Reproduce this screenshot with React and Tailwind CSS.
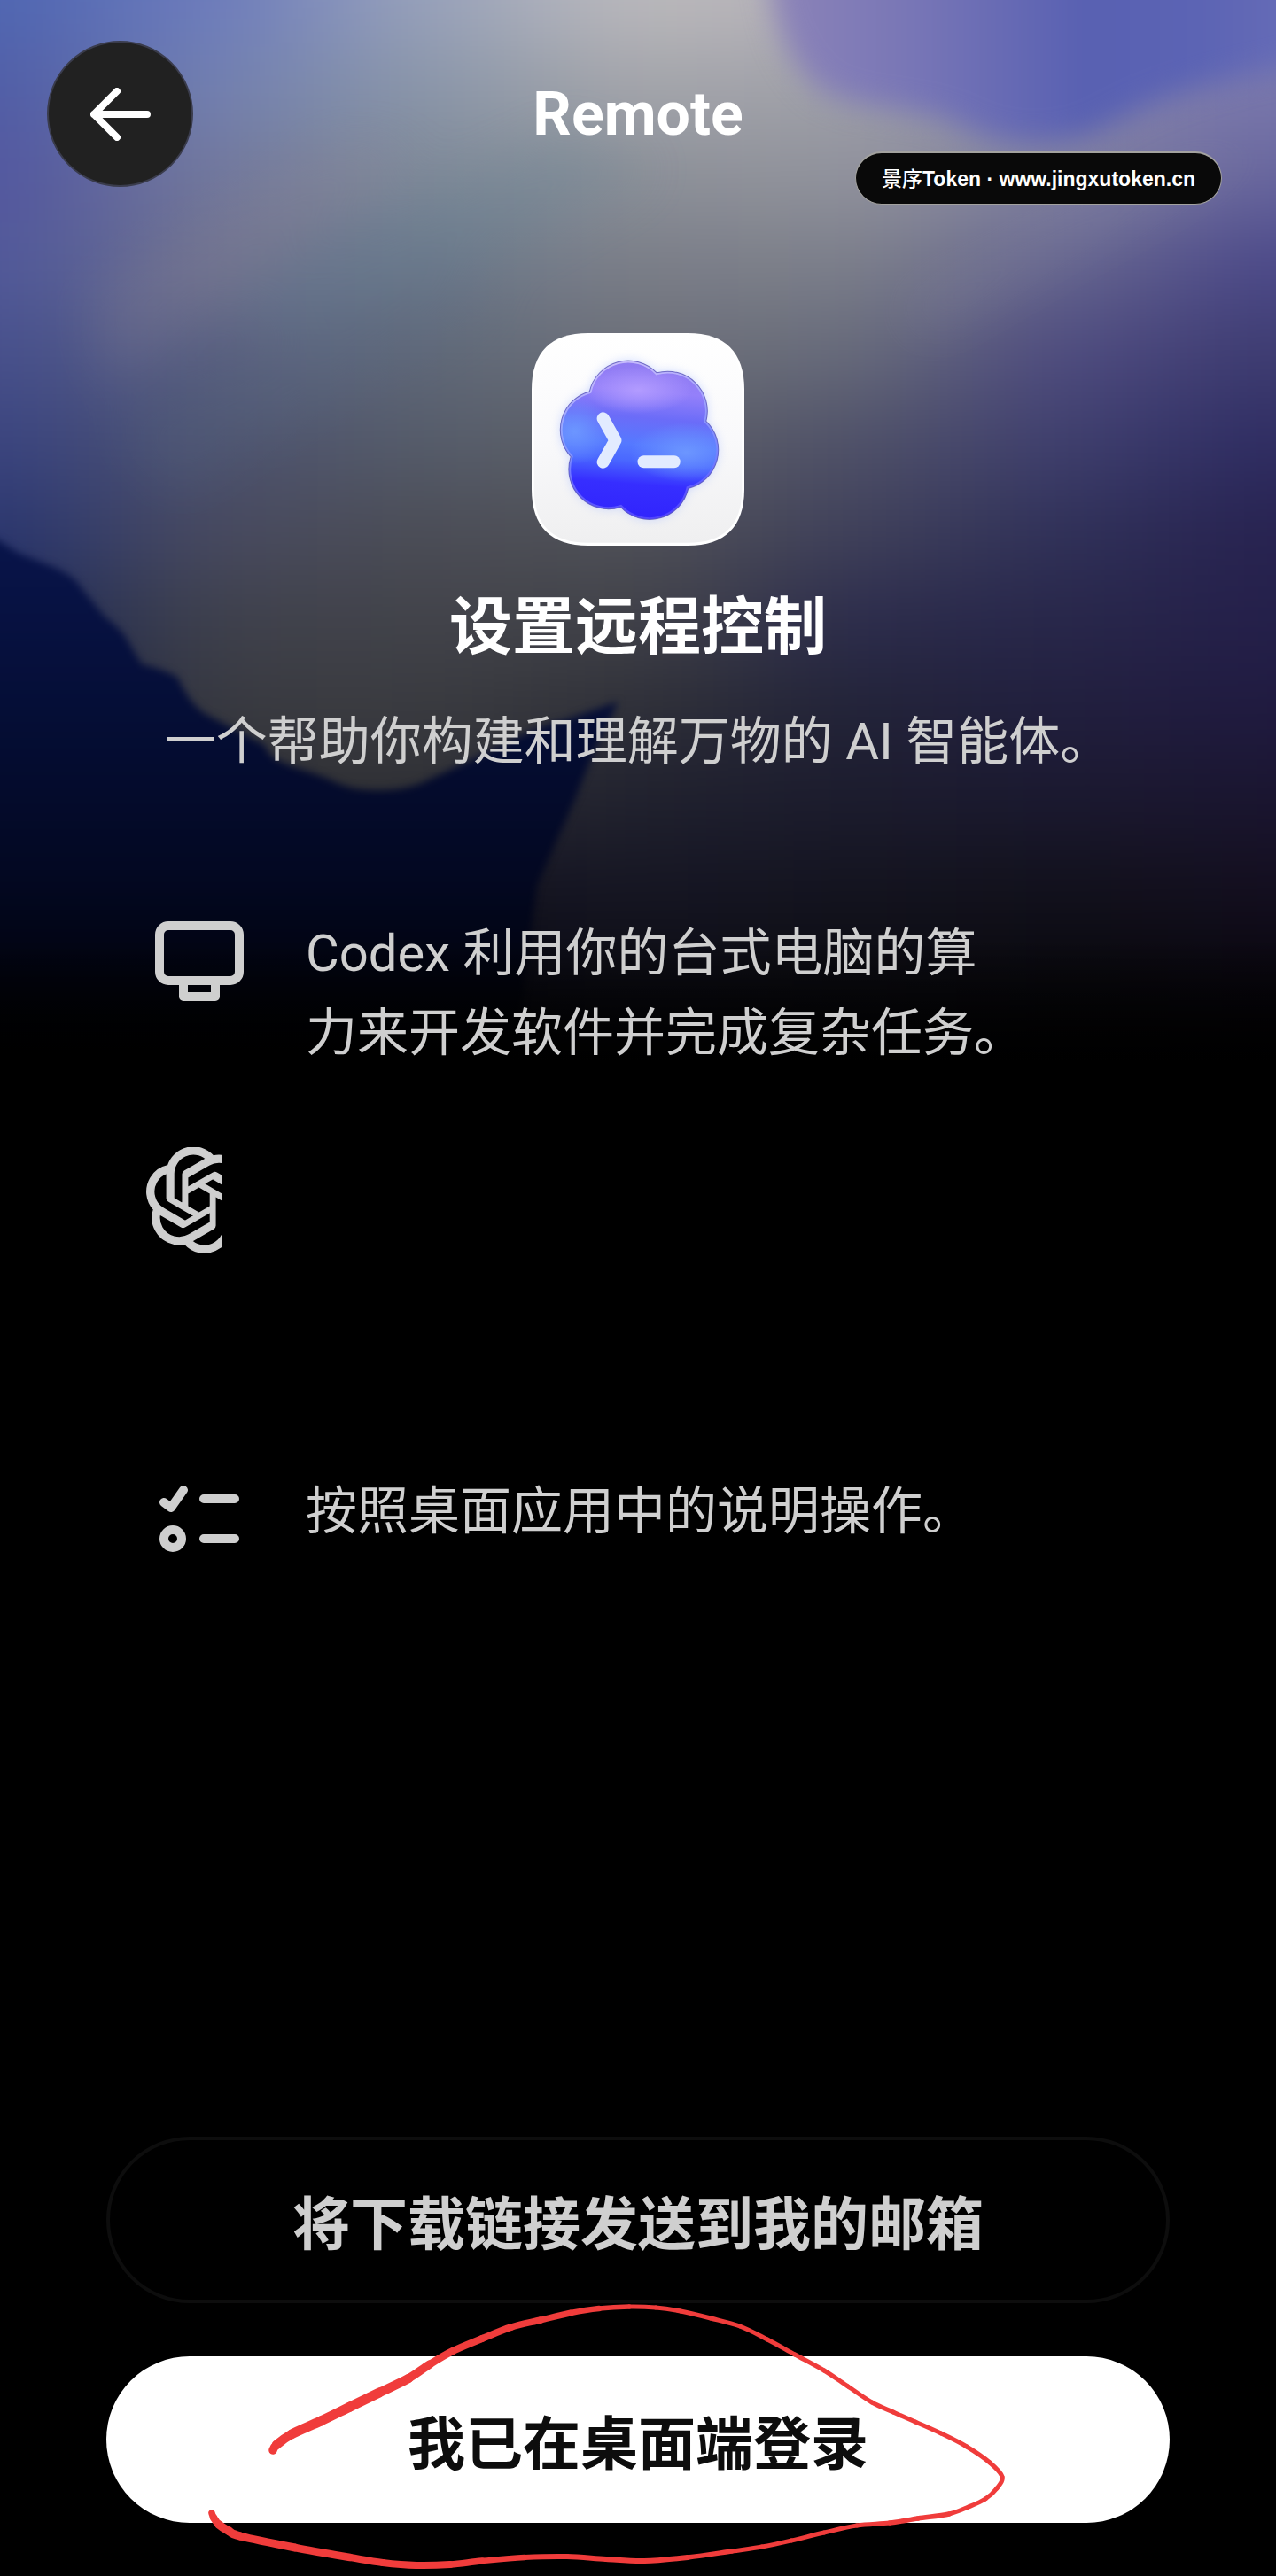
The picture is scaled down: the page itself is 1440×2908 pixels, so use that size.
import React from "react";
import { SiOpenai } from "react-icons/si";

const CELLS = [
  ["#4f66b2", "#6c7bbd", "#98a2bb", "#bcbabc", "#b4b0b8", "#8c88b6", "#7478b8"],
  ["#4f5ca6", "#7280b0", "#8a96a8", "#a4a5aa", "#9fa0a9", "#8886aa", "#7876ac"],
  ["#52569f", "#73789c", "#7e8a98", "#8c9098", "#92939c", "#7f7fa0", "#67659e"],
  ["#50589a", "#6c708e", "#6c788a", "#7b7e88", "#7c7f8a", "#65658f", "#4a4788"],
  ["#464f8c", "#596080", "#5f6878", "#6c6f78", "#676b7a", "#4e4b80", "#3d3b70"],
  ["#3a4480", "#4c516e", "#555c6a", "#5f6168", "#4f5168", "#3f3f6e", "#2e2c62"],
  ["#2a3670", "#484a60", "#4b4d56", "#505158", "#40415a", "#303159", "#272250"],
  ["#1d2858", "#3f414c", "#42434a", "#414248", "#2c2c4c", "#28274a", "#241f4a"],
  ["#101a44", "#393a40", "#3a3b40", "#2f3038", "#222338", "#211f3e", "#201a40"],
  ["#060e30", "#2d2e34", "#303136", "#20212e", "#1c1c2e", "#1b1930", "#1a1530"],
  ["#040920", "#101018", "#141420", "#161624", "#141420", "#12111c", "#140f20"],
  ["#02040f", "#020410", "#080812", "#0e0e16", "#0c0c12", "#0a090f", "#0a0710"],
  ["#000000", "#010104", "#020204", "#040406", "#040406", "#030304", "#030204"],
];

function Artwork() {
  return (
    <svg
      className="absolute inset-x-0 top-0 h-[1200px] w-full"
      viewBox="0 0 1440 1200"
      preserveAspectRatio="none"
      colorInterpolationFilters="sRGB"
      aria-hidden="true"
    >
      <defs>
        <filter id="mesh" x="-20%" y="-20%" width="140%" height="140%">
          <feGaussianBlur stdDeviation="90 42" />
        </filter>
        <filter id="soft" x="-20%" y="-30%" width="140%" height="160%">
          <feGaussianBlur stdDeviation="16" />
        </filter>
        <filter id="edge" x="-20%" y="-20%" width="140%" height="140%">
          <feGaussianBlur stdDeviation="4" />
        </filter>
        <filter id="wide" x="-60%" y="-60%" width="220%" height="220%">
          <feGaussianBlur stdDeviation="30" />
        </filter>
        <linearGradient id="night" x1="0" y1="0" x2="0" y2="1">
          <stop offset="0" stopColor="#09154c" />
          <stop offset="0.35" stopColor="#050e36" />
          <stop offset="0.65" stopColor="#030822" />
          <stop offset="1" stopColor="#000000" />
        </linearGradient>
        <linearGradient id="iris" x1="0" y1="0" x2="1" y2="0">
          <stop offset="0" stopColor="#8d84b8" />
          <stop offset="0.25" stopColor="#7876b6" />
          <stop offset="0.55" stopColor="#5860b2" />
          <stop offset="0.75" stopColor="#5c64b4" />
          <stop offset="1" stopColor="#6c70b8" />
        </linearGradient>
        <linearGradient id="floor" x1="0" y1="0" x2="0" y2="1">
          <stop offset="0" stopColor="#000" stopOpacity="0" />
          <stop offset="1" stopColor="#000" />
        </linearGradient>
      </defs>
      <g filter="url(#mesh)">
        {CELLS.map((row, r) =>
          row.map((fill, c) => (
            <rect
              key={`${r}-${c}`}
              x={c === 0 ? -300 : c * 240 - 121}
              y={r === 0 ? -200 : r * 100 - 51}
              width={c === 0 ? 420 : c === 6 ? 450 : 242}
              height={r === 0 ? 250 : 102}
              fill={fill}
            />
          ))
        )}
      </g>
      <path
        d="M866 -60 C870 30 890 75 930 104 C980 128 1040 118 1092 146 C1140 168 1210 168 1262 136 C1320 104 1390 86 1520 60 V-60Z"
        fill="url(#iris)"
        filter="url(#soft)"
      />
      <g filter="url(#wide)" opacity="0.22">
        <path d="M240 330 L640 150 L740 190 L360 400Z" fill="#5f7f92" />
        <path d="M120 480 L520 300 L560 340 L200 560Z" fill="#5a6c84" />
        <path d="M100 330 L380 160 L480 170 L120 440Z" fill="#8f8694" />
        <path d="M1440 160 L1180 300 L1040 380 L1020 340 L1300 200Z" fill="#8c8ca4" />
      </g>
      <path
        d="M-30 592 L20 624 L60 640 Q84 650 92 664 L118 696 Q140 712 148 730 L160 750 Q180 754 200 764 C212 788 218 796 232 806 L300 842 C302 862 345 868 372 880 Q395 892 418 892 Q458 894 484 880 L551 849 Q600 822 640 812 L698 792 Q668 850 650 900 L606 1000 L580 1200 H-30Z"
        fill="url(#night)"
        filter="url(#edge)"
      />
      <rect y="1060" width="1440" height="140" fill="url(#floor)" />
    </svg>
  );
}

function CodexLogo() {
  return (
    <svg viewBox="120 108 717 717" className="size-[240px]" colorInterpolationFilters="sRGB" role="img" aria-label="Codex">
      <defs>
        <linearGradient id="tile" x1="0" y1="0" x2="0" y2="1">
          <stop offset="0" stopColor="#ffffff" />
          <stop offset="0.5" stopColor="#f9f9fb" />
          <stop offset="1" stopColor="#efeff0" />
        </linearGradient>
        <linearGradient id="bloom" x1="0.5" y1="0" x2="0.42" y2="1">
          <stop offset="0" stopColor="#8f7af0" />
          <stop offset="0.2" stopColor="#9480fa" />
          <stop offset="0.36" stopColor="#6b6cf8" />
          <stop offset="0.52" stopColor="#5579ff" />
          <stop offset="0.62" stopColor="#4a68ff" />
          <stop offset="0.76" stopColor="#362eff" />
          <stop offset="1" stopColor="#3022fc" />
        </linearGradient>
        <radialGradient id="glow">
          <stop offset="0" stopColor="#6c96ff" />
          <stop offset="1" stopColor="#6c96ff" stopOpacity="0" />
        </radialGradient>
        <radialGradient id="lilac">
          <stop offset="0" stopColor="#b29bff" />
          <stop offset="1" stopColor="#b29bff" stopOpacity="0" />
        </radialGradient>
        <linearGradient id="rim" x1="0.4" y1="0" x2="0.6" y2="1">
          <stop offset="0" stopColor="#d9d0ff" />
          <stop offset="0.5" stopColor="#8f9dff" />
          <stop offset="1" stopColor="#5b4dff" />
        </linearGradient>
        <filter id="halo" x="-20%" y="-20%" width="140%" height="140%">
          <feGaussianBlur stdDeviation="16" />
        </filter>
        <clipPath id="petals">
          <path d="M315 305 A134 134 0 0 1 542 242 A134 134 0 0 1 708 405 A134 134 0 0 1 648 632 A134 134 0 0 1 420 695 A134 134 0 0 1 252 525 A134 134 0 0 1 315 305Z" />
        </clipPath>
      </defs>
      <path
        d="M310 108 H647 C772 108 837 173 837 298 V635 C837 760 772 825 647 825 H310 C185 825 120 760 120 635 V298 C120 173 185 108 310 108Z"
        fill="#ffffff"
      />
      <path
        d="M310 114 H647 C768 114 829 177 829 298 V635 C829 756 768 815 647 815 H310 C189 815 128 756 128 635 V298 C128 177 189 114 310 114Z"
        fill="url(#tile)"
      />
      <path
        d="M315 305 A134 134 0 0 1 542 242 A134 134 0 0 1 708 405 A134 134 0 0 1 648 632 A134 134 0 0 1 420 695 A134 134 0 0 1 252 525 A134 134 0 0 1 315 305Z"
        fill="#9db4ff"
        opacity="0.5"
        filter="url(#halo)"
      />
      <g clipPath="url(#petals)">
        <rect x="200" y="190" width="560" height="560" fill="url(#bloom)" />
        <ellipse cx="480" cy="300" rx="180" ry="80" fill="url(#lilac)" />
        <ellipse cx="265" cy="440" rx="130" ry="110" fill="url(#glow)" />
        <ellipse cx="640" cy="510" rx="190" ry="100" fill="url(#glow)" />
        <path
          d="M315 305 A134 134 0 0 1 542 242 A134 134 0 0 1 708 405 A134 134 0 0 1 648 632 A134 134 0 0 1 420 695 A134 134 0 0 1 252 525 A134 134 0 0 1 315 305Z"
          fill="none"
          stroke="url(#rim)"
          strokeWidth="14"
          opacity="0.75"
        />
      </g>
      <path
        d="M315 305 A134 134 0 0 1 542 242 A134 134 0 0 1 708 405 A134 134 0 0 1 648 632 A134 134 0 0 1 420 695 A134 134 0 0 1 252 525 A134 134 0 0 1 315 305Z"
        fill="none"
        stroke="#5a58b8"
        strokeWidth="3"
        opacity="0.8"
      />
      <g fill="none" stroke="#e2ebff" strokeWidth="42" strokeLinecap="round" strokeLinejoin="round">
        <path d="M361 396 L402 470 L361 543" />
        <path d="M498 542 H600" />
      </g>
    </svg>
  );
}

function MonitorIcon() {
  return (
    <svg viewBox="0 0 100 90" className="mt-[9px] h-[90px] w-[100px]" fill="none" stroke="currentColor" strokeWidth="10" aria-hidden="true">
      <rect x="5" y="5" width="90" height="62" rx="10" />
      <path d="M32 67 V85 H68 V67" strokeLinejoin="round" />
    </svg>
  );
}

function KnotIcon() {
  return (
    <div className="mt-[24px] w-[120px] pr-[35px]">
      <div className="overflow-hidden">
        <SiOpenai className="size-[119px]" stroke="currentColor" strokeWidth="0.3" aria-hidden="true" />
      </div>
    </div>
  );
}

function ChecklistIcon() {
  return (
    <svg viewBox="0 0 90 76" className="mt-[16px] h-[76px] w-[90px]" fill="none" stroke="currentColor" strokeWidth="10" strokeLinecap="round" strokeLinejoin="round" aria-hidden="true">
      <path d="M5 19 L13 25 L27 5" />
      <circle cx="15" cy="60" r="10" />
      <path d="M50 15 H85 M50 60 H85" />
    </svg>
  );
}

const STROKE = [
  [308, 2766, 9], [312, 2760, 10], [329, 2748, 11], [362, 2733, 11], [395, 2717, 11], [428, 2701, 11], [461, 2685, 10], [485, 2669, 9],
  [511, 2654, 8], [544, 2640, 8], [577, 2627, 8], [610, 2619, 7], [644, 2611, 7], [676, 2606, 6], [710, 2604, 5],
  [740, 2605, 5], [768, 2609, 5], [802, 2617, 5], [835, 2626, 5], [866, 2641, 5], [897, 2658, 5], [930, 2676, 5],
  [957, 2694, 5], [984, 2712, 5], [1008, 2723, 5], [1033, 2734, 5], [1062, 2747, 5], [1091, 2762, 5], [1117, 2780, 5],
  [1131, 2796, 5], [1125, 2809, 5], [1112, 2821, 5], [1093, 2830, 5], [1071, 2838, 5], [1036, 2843, 6], [1004, 2848, 5],
  [967, 2851, 5], [930, 2859, 5], [893, 2868, 5], [860, 2875, 5], [826, 2880, 5], [776, 2887, 6], [727, 2891, 6],
  [684, 2889, 6], [640, 2886, 6], [592, 2887, 6], [544, 2891, 7], [508, 2895, 8], [470, 2896, 8], [432, 2893, 8],
  [395, 2887, 8], [333, 2876, 9], [271, 2863, 9], [258, 2857, 10], [247, 2850, 9], [241, 2842, 8], [239, 2837, 7],
];

function MarkerLoop() {
  const segments = [];
  for (let i = 0; i < STROKE.length - 1; i++) {
    const p0 = STROKE[Math.max(0, i - 1)];
    const p1 = STROKE[i];
    const p2 = STROKE[i + 1];
    const p3 = STROKE[Math.min(STROKE.length - 1, i + 2)];
    const c1 = [p1[0] + (p2[0] - p0[0]) / 6, p1[1] + (p2[1] - p0[1]) / 6];
    const c2 = [p2[0] - (p3[0] - p1[0]) / 6, p2[1] - (p3[1] - p1[1]) / 6];
    segments.push(
      <path key={i} d={`M${p1[0]} ${p1[1]} C${c1[0]} ${c1[1]} ${c2[0]} ${c2[1]} ${p2[0]} ${p2[1]}`} strokeWidth={(p1[2] + p2[2]) / 2} />
    );
  }
  return (
    <svg
      className="pointer-events-none absolute inset-0 h-full w-full"
      viewBox="0 2412 1440 496"
      fill="none"
      stroke="#f03c3b"
      strokeLinecap="round"
      aria-hidden="true"
    >
      {segments}
    </svg>
  );
}

function Feature({ icon, children, className = "" }) {
  return (
    <li className={`flex items-start ${className}`}>
      <div className="mr-[60px] flex w-[120px] shrink-0 justify-center">{icon}</div>
      {children}
    </li>
  );
}

export default function App() {
  return (
    <div className="relative flex min-h-screen flex-col overflow-hidden bg-black font-[Roboto,'Noto_Sans_CJK_SC',sans-serif] text-[#cfcfcf]">
      <Artwork />

      <header className="relative grid grid-cols-[1fr_auto_1fr] items-center px-[53px] pt-[46px]">
        <button
          type="button"
          aria-label="返回"
          className="flex size-[165px] items-center justify-center rounded-full border-2 border-[#3a3c4c] bg-[#212121] text-white"
        >
          <svg viewBox="0 0 68 60" className="h-[60px] w-[68px]" fill="none" stroke="currentColor" strokeWidth="8" strokeLinecap="round" strokeLinejoin="round" aria-hidden="true">
            <path d="M30 4 L4 30 L30 56 M4 30 H64" />
          </svg>
        </button>
        <h1 className="text-[68px] leading-[80px] font-bold text-white">Remote</h1>
      </header>

      <a
        href="#token"
        className="absolute top-[171px] right-[61px] flex h-[60px] items-center rounded-full border border-t-2 border-[#a3a29f] bg-[#090909] px-[29px] font-['Liberation_Sans','Noto_Sans_CJK_SC',sans-serif] text-[23px] leading-[28px] font-bold whitespace-nowrap text-white"
      >
        <span className="font-medium">景序</span>Token · www.jingxutoken.cn
      </a>

      <main className="relative flex flex-1 flex-col">
        <section className="flex flex-col items-center pt-[165px] text-center">
          <CodexLogo />
          <h2 className="mt-[42px] text-[71px] leading-[100px] font-bold text-white">设置远程控制</h2>
          <p className="mt-[34px] text-[58px] leading-[90px]">一个帮助你构建和理解万物的 AI 智能体。</p>
        </section>

        <ul className="mt-[149px] flex flex-col gap-[60px] px-[165px] text-[58px] leading-[90px]">
          <Feature icon={<MonitorIcon />}>
            <p>
              Codex 利用你的台式电脑的算
              <br />
              力来开发软件并完成复杂任务。
            </p>
          </Feature>
          <Feature icon={<KnotIcon />} className="h-[330px]" />
          <Feature icon={<ChecklistIcon />}>
            <p>按照桌面应用中的说明操作。</p>
          </Feature>
        </ul>
      </main>

      <footer className="relative flex flex-col gap-[60px] px-[120px] pb-[60px]">
        <button type="button" className="h-[188px] rounded-full border-4 border-[#0d0d0d] bg-black pt-[12px] text-[65px] leading-[80px] font-bold">
          将下载链接发送到我的邮箱
        </button>
        <button type="button" className="h-[188px] rounded-full bg-white pt-[12px] text-[65px] leading-[80px] font-bold text-[#0d0d0d]">
          我已在桌面端登录
        </button>
        <MarkerLoop />
      </footer>
    </div>
  );
}
